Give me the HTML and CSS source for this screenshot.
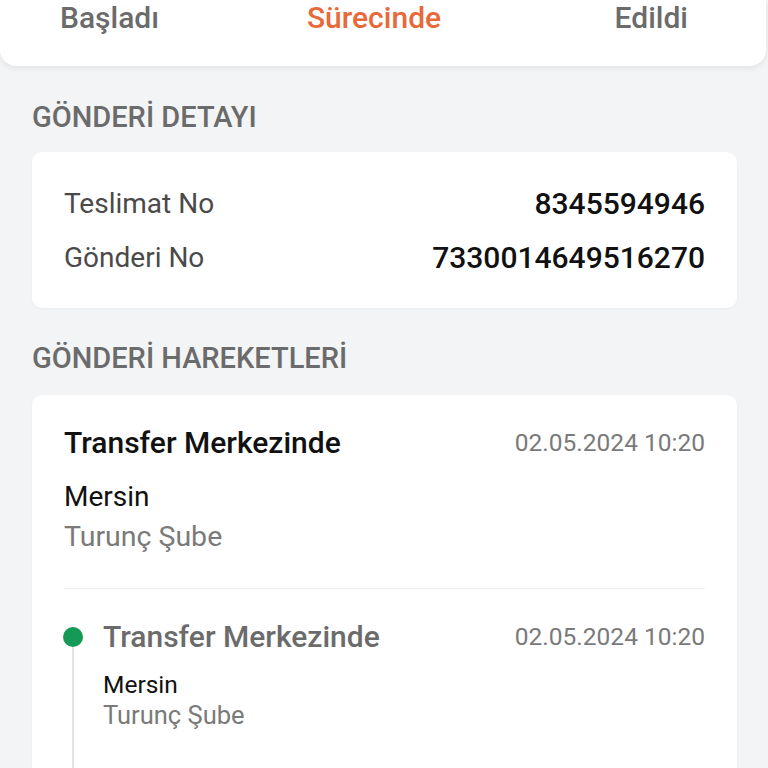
FILE: index.html
```html
<!DOCTYPE html>
<html lang="tr">
<head>
<meta charset="utf-8">
<link rel="stylesheet" href="styles.css">
</head>
<body>
<div class="tabs">
  <span class="tab">Başladı</span>
  <span class="tab active">Sürecinde</span>
  <span class="tab">Edildi</span>
</div>

<h2 class="section-title first">GÖNDERİ DETAYI</h2>
<div class="card detail">
  <div class="row"><span class="label">Teslimat No</span><span class="value">8345594946</span></div>
  <div class="row"><span class="label">Gönderi No</span><span class="value">7330014649516270</span></div>
</div>

<h2 class="section-title second">GÖNDERİ HAREKETLERİ</h2>
<div class="card moves">
  <div class="latest">
    <div class="head"><span class="title">Transfer Merkezinde</span><span class="date">02.05.2024 10:20</span></div>
    <div class="city">Mersin</div>
    <div class="branch">Turunç Şube</div>
  </div>
  <div class="divider"></div>
  <div class="timeline">
    <div class="event">
      <span class="dot"></span>
      <div class="head"><span class="title t-gray">Transfer Merkezinde</span><span class="date">02.05.2024 10:20</span></div>
      <div class="city small">Mersin</div>
      <div class="branch small">Turunç Şube</div>
    </div>
  </div>
</div>
</body>
</html>
```

FILE: styles.css
```css
* { box-sizing: border-box; }
html, body { margin: 0; padding: 0; }
body {
  background: #f3f4f6;
  font-family: Roboto, "Noto Sans", sans-serif;
  width: 768px;
  height: 768px;
  overflow: hidden;
}
.tabs {
  background: #fff;
  height: 66px;
  width: 766px;
  border-radius: 0 0 16px 16px;
  box-shadow: 0 2px 6px rgba(0,0,0,0.08);
  display: grid;
  grid-template-columns: 1fr 1fr 1fr;
  align-items: start;
  padding: 0 78px 0 60px;
}
.tab {
  font-size: 30px;
  font-weight: 500;
  color: #6b6b6b;
  line-height: 35px;
  text-align: center;
  white-space: nowrap;
}
.tab:first-child { text-align: left; }
.tab:last-child { text-align: right; }
.tab.active { color: #e8693a; }
.section-title {
  margin: 0;
  font-size: 29px;
  font-weight: 500;
  color: #6b6b6b;
  padding: 0 32px;
  line-height: 36px;
}
.section-title.first { padding-top: 33px; padding-bottom: 17px; }
.section-title.second { padding-top: 32px; padding-bottom: 19px; }
.card {
  background: #fff;
  margin: 0 31px 0 32px;
  border-radius: 10px;
  box-shadow: 0 1px 3px rgba(0,0,0,0.04);
}
.detail {
  padding: 34px 32px 32px 32px;
  display: flex;
  flex-direction: column;
  gap: 18px;
}
.row {
  display: flex;
  justify-content: space-between;
  align-items: center;
  line-height: 36px;
}
.label { font-size: 28px; color: #4a4a4a; }
.value { font-size: 30px; font-weight: 500; color: #111; }
.moves { padding: 30px 32px 0; height: 400px; }
.head {
  display: flex;
  justify-content: space-between;
  align-items: center;
  line-height: 36px;
}
.title { font-size: 30px; font-weight: 500; color: #111; }
.title.t-gray { color: #6b6b6b; }
.date { font-size: 24.5px; color: #7a7a7a; }
.city { font-size: 28px; color: #111; margin-top: 18px; line-height: 36px; }
.branch { font-size: 28.5px; color: #7a7a7a; line-height: 36px; margin-top: 4px; }
.divider { height: 1px; background: #eeeeee; margin-top: 33px; }
.timeline { padding-top: 30px; }
.event { position: relative; padding-left: 39px; padding-bottom: 60px; }
.event::before {
  content: "";
  position: absolute;
  left: 8px;
  top: 18px;
  bottom: -100px;
  width: 2px;
  background: #e2e2e2;
}
.dot {
  position: absolute;
  left: -1px;
  top: 8px;
  width: 20px;
  height: 20px;
  border-radius: 50%;
  background: #159a56;
}
.city.small { font-size: 24.5px; margin-top: 15px; line-height: 30px; }
.branch.small { font-size: 25.5px; margin-top: 0; line-height: 30px; }
```
